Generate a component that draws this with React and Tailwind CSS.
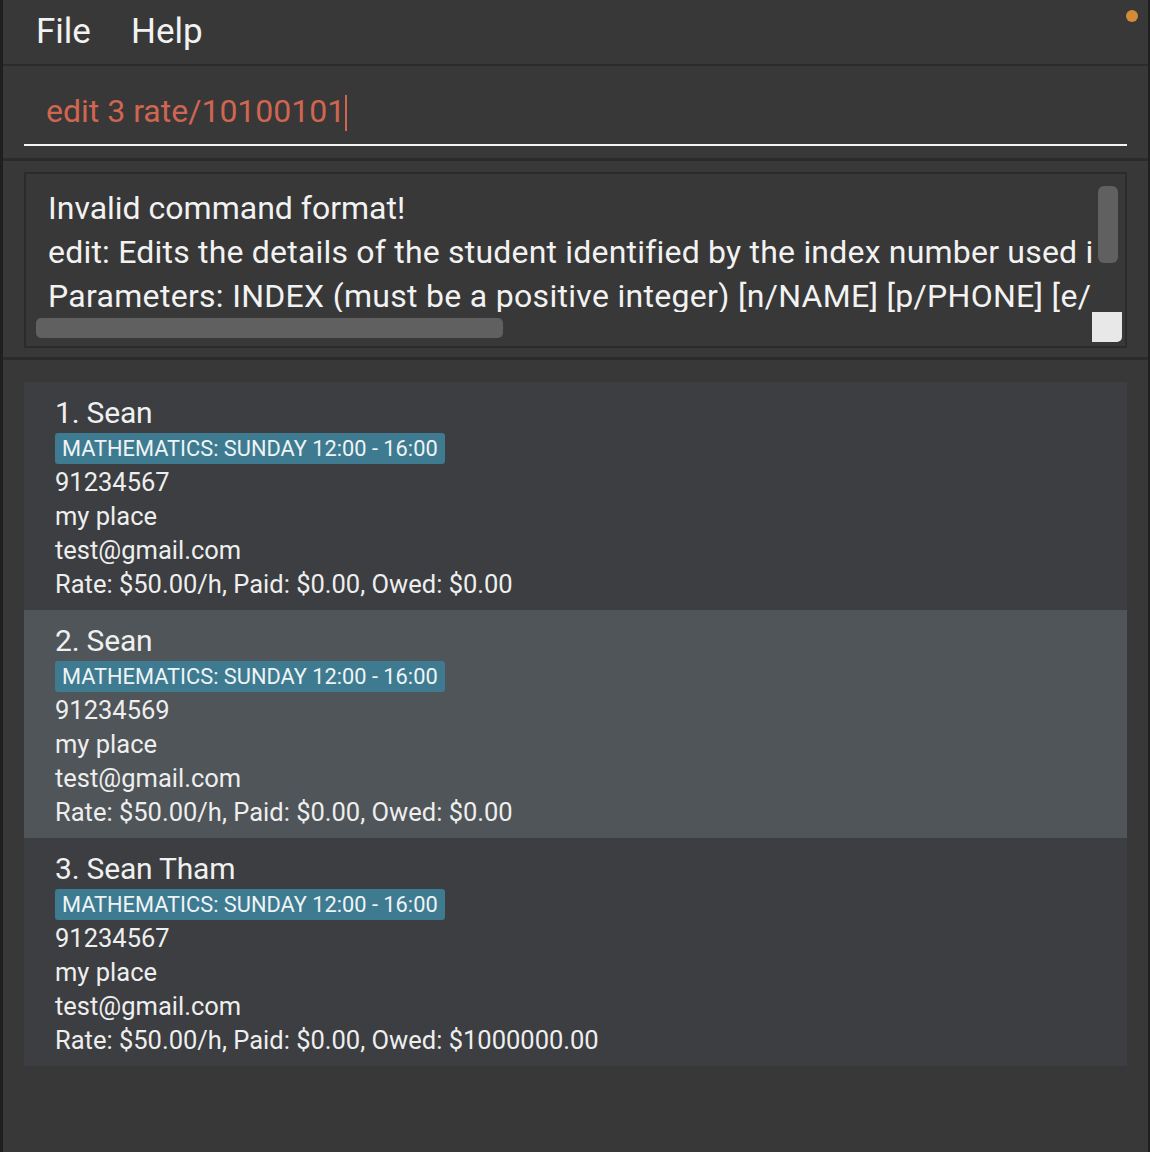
// Dark-theme address book window: menu bar, command box, result display, student list
const font = { fontFamily: 'Roboto, "Liberation Sans", sans-serif' };

const students = [
  { name: '1. Sean', phone: '91234567', owed: '$0.00', bg: 'bg-[#3c3e41]' },
  { name: '2. Sean', phone: '91234569', owed: '$0.00', bg: 'bg-[#4f5558]' },
  { name: '3. Sean Tham', phone: '91234567', owed: '$1000000.00', bg: 'bg-[#3c3e41]' },
];

function StudentCard({ s }) {
  return (
    <div className={`${s.bg} h-[228px] pl-[31px] pt-[12px]`}>
      <div className="text-[30px] leading-[38px] tracking-[-0.2px] text-[#f0f0f0]">{s.name}</div>
      <div className="mt-[1px] inline-block rounded-[3px] bg-[#3e7b91] px-[7px] text-[21.8px] leading-[31px] text-[#eef4f6]">
        MATHEMATICS: SUNDAY 12:00 - 16:00
      </div>
      <div className="mt-[1px] text-[25.5px] leading-[34px] text-[#eeeeee]">
        <div>{s.phone}</div>
        <div>my place</div>
        <div>test@gmail.com</div>
        <div>Rate: $50.00/h, Paid: $0.00, Owed: {s.owed}</div>
      </div>
    </div>
  );
}

export default function App() {
  return (
    <div style={font} className="flex h-[1152px] w-[1150px] flex-col overflow-hidden bg-[#383838] border-l-[3px] border-r-[2px] border-[#1f1f1f]">
      {/* menu bar */}
      <div className="relative flex h-[64px] items-center gap-[40px] pl-[33px] text-[35px] text-[#f2f2f2]">
        <span>File</span>
        <span>Help</span>
        <span className="absolute right-[10px] top-[10px] h-[12px] w-[12px] rounded-full bg-[#d38b3a]" />
      </div>
      <div className="h-[2px] bg-[#2b2b2b]" />

      {/* command box */}
      <div className="h-[92px] px-[21px] pt-[22px]">
        <div className="flex h-[58px] items-start border-b-[2px] border-[#f4f4f4] pl-[22px]">
          <span className="text-[32px] leading-[46px] text-[#d06651]">edit 3 rate/10100101</span>
          <span className="mt-[7px] h-[36px] w-[2px] bg-[#d06651]" />
        </div>
      </div>
      <div className="h-[3px] bg-[#2b2b2b]" />

      {/* result display */}
      <div className="h-[196px] px-[21px] pt-[11px]">
        <div className="relative h-[176px] border-[2px] border-[#2b2b2b]">
          <div className="h-[138px] w-[1066px] overflow-hidden whitespace-nowrap pl-[22px] pt-[12px] text-[32px] leading-[44px] text-[#f2f2f2]">
            <div>Invalid command format!</div>
            <div className="tracking-[0.2px]">edit: Edits the details of the student identified by the index number used in the displayed student list.</div>
            <div className="tracking-[0.3px]">Parameters: INDEX (must be a positive integer) [n/NAME] [p/PHONE] [e/EMAIL] [a/ADDRESS] [l/LESSON]</div>
          </div>
          <div className="absolute left-[10px] top-[144px] h-[20px] w-[467px] rounded-[5px] bg-[#606060]" />
          <div className="absolute left-[1072px] top-[12px] h-[77px] w-[20px] rounded-[6px] bg-[#606060]" />
          <div className="absolute left-[1066px] top-[138px] h-[30px] w-[30px] rounded-br-[5px] bg-[#e8e8e8]" />
        </div>
      </div>
      <div className="h-[3px] bg-[#2b2b2b]" />

      {/* student list */}
      <div className="flex-1 px-[21px] pt-[22px]">
        {students.map((s) => (
          <StudentCard key={s.name} s={s} />
        ))}
      </div>
    </div>
  );
}
